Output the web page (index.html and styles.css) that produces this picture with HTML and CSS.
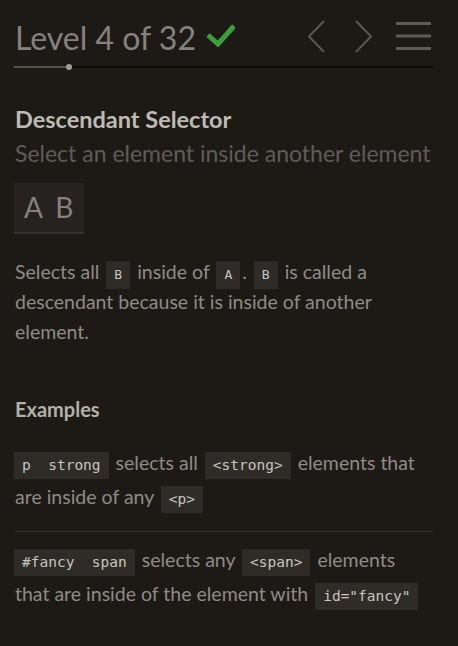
FILE: index.html
```html
<!DOCTYPE html>
<html lang="en">
<head>
<meta charset="utf-8">
<title>CSS Diner - Level 4</title>
<link rel="stylesheet" href="styles.css">
</head>
<body>
<div class="sidebar">
  <div class="level-header">
    <h2 class="level-title">Level 4 of 32
      <svg class="check" width="28" height="24" viewBox="0 0 28 24"><path d="M1 12 L11 21 L27 3" fill="none" stroke="#3c9f3c" stroke-width="5"/></svg>
    </h2>
    <div class="level-nav">
      <svg class="nav-arrow" width="20" height="34" viewBox="0 0 20 34"><path d="M17 1 L2 16.5 L17 32" fill="none" stroke="#5a5751" stroke-width="2"/></svg>
      <svg class="nav-arrow" width="20" height="34" viewBox="0 0 20 34"><path d="M2 1 L17 16.5 L2 32" fill="none" stroke="#5a5751" stroke-width="2"/></svg>
      <svg class="menu" width="35" height="30" viewBox="0 0 35 30"><path d="M0 1.5 H35 M0 14 H35 M0 26.5 H35" stroke="#5f5c57" stroke-width="3"/></svg>
    </div>
  </div>
  <div class="progress"><div class="progress-fill"></div><div class="progress-dot"></div></div>

  <h3 class="selector-name">Descendant Selector</h3>
  <h4 class="title">Select an element inside another element</h4>
  <div class="syntax">A B</div>
  <p class="hint">Selects all <code>B</code> inside of <code>A</code>. <code>B</code> is called a descendant because it is inside of another element.</p>

  <h4 class="examples-title">Examples</h4>
  <div class="example"><code class="ex">p  strong</code> selects all <code class="ex">&lt;strong&gt;</code> elements that are inside of any <code class="ex">&lt;p&gt;</code></div>
  <div class="example"><code class="ex">#fancy  span</code> selects any <code class="ex">&lt;span&gt;</code> elements that are inside of the element with <code class="ex">id="fancy"</code></div>
</div>
</body>
</html>
```

FILE: styles.css
```css
html, body {
  margin: 0;
  padding: 0;
  background: #1d1a16;
}
body {
  font-family: Lato, "Open Sans", sans-serif;
  color: #8a8680;
}
.sidebar {
  padding: 14px 25px 20px 14px;
}
.level-header {
  display: flex;
  align-items: center;
  justify-content: space-between;
  height: 46px;
}
.level-title {
  margin: 0 0 0 1px;
  font-size: 32px;
  font-weight: 400;
  color: #85827d;
  display: flex;
  align-items: center;
  gap: 11px;
}
.check { margin-top: -4px; }
.level-nav {
  display: flex;
  align-items: center;
  gap: 27px;
  margin-right: 2px;
}
.level-nav .menu { margin-left: -5px; }
.progress {
  position: relative;
  margin-top: 6px;
  height: 2px;
  background: #0e0c0a;
}
.progress-fill {
  width: 55px;
  height: 2px;
  background: #55524c;
}
.progress-dot {
  position: absolute;
  left: 52px;
  top: -2px;
  width: 6px;
  height: 6px;
  border-radius: 50%;
  background: #a09c96;
}
.selector-name {
  margin: 37px 0 0 1px;
  font-size: 23.5px;
  font-weight: 700;
  color: #bdbab4;
}
.title {
  margin: 6px 0 0 1px;
  font-size: 23px;
  font-weight: 400;
  color: #5f5c57;
}
.syntax {
  display: inline-block;
  margin-top: 16px;
  padding: 0 11px 0 10px;
  height: 49px;
  line-height: 49px;
  font-size: 28px;
  word-spacing: 6px;
  color: #85827d;
  background: #25221f;
  border-bottom: 2px solid #34312d;
}
.hint {
  margin: 23px 0 0 1px;
  font-size: 19.5px;
  line-height: 30px;
  color: #8f8b85;
}
code {
  font-family: "DejaVu Sans Mono", monospace;
  font-size: 13px;
  line-height: 1;
  color: #c8c5bf;
  background: #2f2c28;
  padding: 6px 8px 7px;
  margin: 0 2px;
}
.examples-title {
  margin: 50px 0 14px 1px;
  font-size: 20px;
  font-weight: 700;
  color: #b3b0aa;
}
.example {
  margin-left: 1px;
  padding: 11px 0 17px;
  font-size: 19.5px;
  line-height: 34px;
  color: #8f8b85;
  border-bottom: 1px solid #34312c;
}
.example:last-child { border-bottom: none; }
code.ex {
  font-size: 14.5px;
  white-space: pre;
  padding: 5px 8px 6px;
}
.example code.ex:first-child { margin-left: -1px; }
```
